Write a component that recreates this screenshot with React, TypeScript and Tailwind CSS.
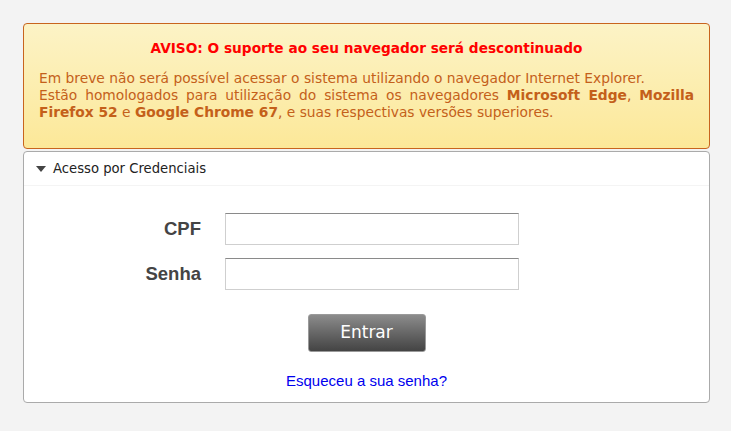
export default function App() {
  return (
    <div className="min-h-[431px] w-full bg-[#f3f3f3] pt-[23px] px-[23px] pb-[28px]" style={{ fontFamily: '"DejaVu Sans", Verdana, sans-serif' }}>
      <div className="w-[687px]">
        {/* Aviso */}
        <div className="rounded-[4px] border border-[#c8641e] bg-gradient-to-b from-[#fcf3c6] to-[#fce898] px-[15px] pt-[15px] pb-[27px]">
          <p className="text-center text-[13.7px] font-bold leading-[18px] text-[#ff0000]">
            AVISO: O suporte ao seu navegador será descontinuado
          </p>
          <p className="mt-[13px] text-justify text-[13.8px] leading-[17px] text-[#c4601a]">
            Em breve não será possível acessar o sistema utilizando o navegador Internet Explorer.
            <br />
            Estão homologados para utilização do sistema os navegadores <b>Microsoft Edge</b>, <b>Mozilla Firefox 52</b> e <b>Google Chrome 67</b>, e suas respectivas versões superiores.
          </p>
        </div>

        {/* Acesso */}
        <div className="mt-[2px] rounded-[4px] border border-[#aaaaaa] bg-white">
          <div className="flex h-[34px] items-center gap-[7px] border-b border-[#f4f4f4] pl-[12px]">
            <svg width="10" height="6" viewBox="0 0 10 6" className="mt-[1px]">
              <path d="M0 0 L10 0 L5 6 Z" fill="#444" />
            </svg>
            <span className="text-[13.2px] text-[#222]">Acesso por Credenciais</span>
          </div>
          <form className="flex flex-col pt-[27px] pb-[9px]" style={{ fontFamily: '"Liberation Sans", Arial, sans-serif' }}>
            <div className="flex items-center">
              <label className="w-[177px] text-right text-[18.5px] font-bold text-[#444]">CPF</label>
              <input className="ml-[24px] h-[32px] w-[294px] border border-[#cfcfcf] border-t-[#8a8a8a] bg-white" />
            </div>
            <div className="mt-[13px] flex items-center">
              <label className="w-[177px] text-right text-[18.5px] font-bold text-[#444]">Senha</label>
              <input type="password" className="ml-[24px] h-[32px] w-[294px] border border-[#cfcfcf] border-t-[#8a8a8a] bg-white" />
            </div>
            <div className="mt-[24px] flex justify-center">
              <button type="button" className="h-[38px] w-[118px] rounded-[3px] border border-[#9a9a9a] bg-gradient-to-b from-[#8c8c8c] to-[#444444] text-[17px] text-white" style={{ fontFamily: '"DejaVu Sans", Verdana, sans-serif' }}>
                Entrar
              </button>
            </div>
            <div className="mt-[18px] flex justify-center">
              <a href="#" className="text-[15px] text-[#0000ee]">Esqueceu a sua senha?</a>
            </div>
          </form>
        </div>
      </div>
    </div>
  );
}
